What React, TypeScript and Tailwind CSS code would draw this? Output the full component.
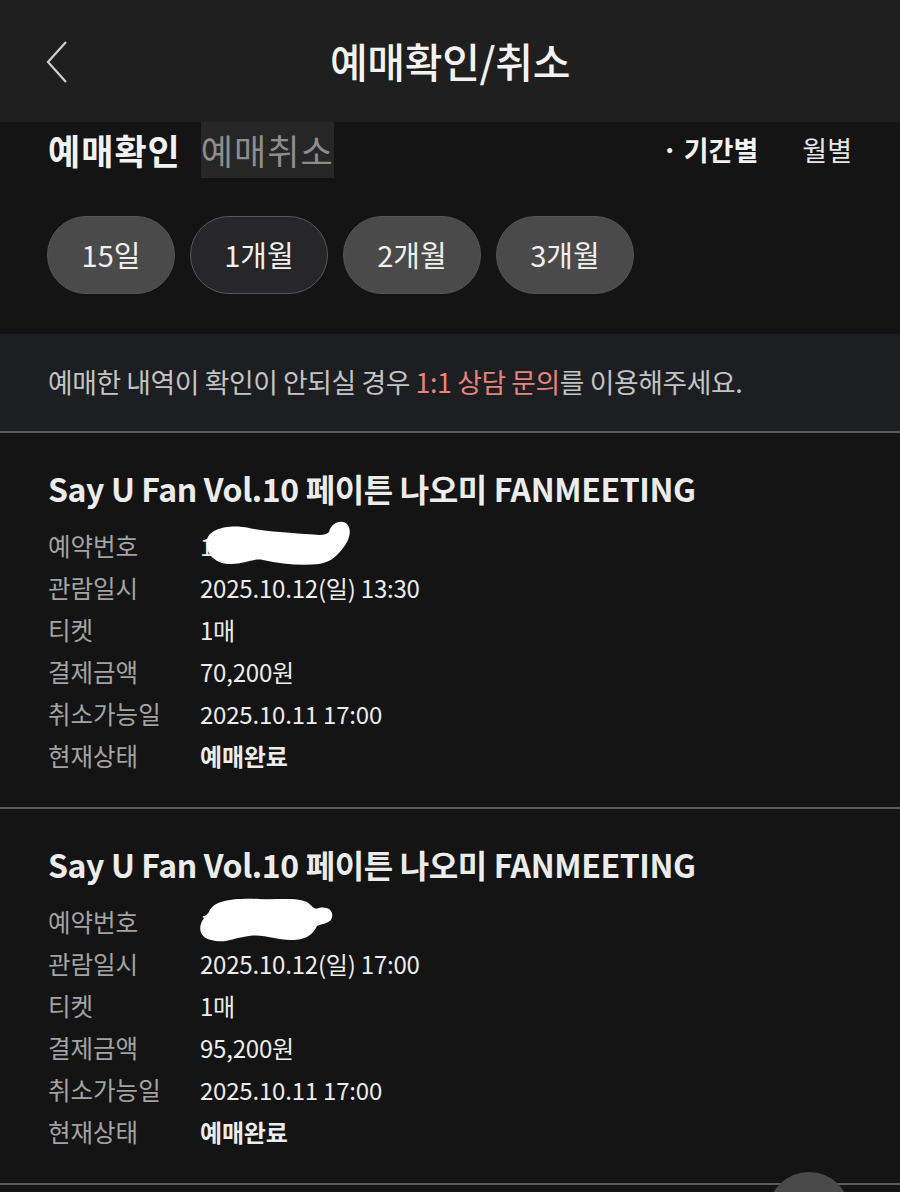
import React from "react";

const FONT = { fontFamily: '"Noto Sans CJK KR", "Noto Sans", sans-serif' };

type Booking = {
  title: string;
  date: string;
  tickets: string;
  price: string;
  cancelUntil: string;
  status: string;
  blob: "a" | "b";
};

const bookings: Booking[] = [
  {
    title: "Say U Fan Vol.10 페이튼 나오미 FANMEETING",
    date: "2025.10.12(일) 13:30",
    tickets: "1매",
    price: "70,200원",
    cancelUntil: "2025.10.11 17:00",
    status: "예매완료",
    blob: "a",
  },
  {
    title: "Say U Fan Vol.10 페이튼 나오미 FANMEETING",
    date: "2025.10.12(일) 17:00",
    tickets: "1매",
    price: "95,200원",
    cancelUntil: "2025.10.11 17:00",
    status: "예매완료",
    blob: "b",
  },
];

const periods = [
  { label: "15일", w: "w-[128px]", active: false },
  { label: "1개월", w: "w-[138px]", active: true },
  { label: "2개월", w: "w-[138px]", active: false },
  { label: "3개월", w: "w-[138px]", active: false },
];

function Redaction({ kind }: { kind: "a" | "b" }) {
  if (kind === "a") {
    return (
      <svg
        width="150"
        height="48"
        viewBox="0 0 150 48"
        className="absolute left-[1px] top-[-8px]"
      >
        <path
          d="M6 20 C8 8 30 4 48 8 C62 11 80 12 104 14 C118 15 124 16 128 12 C130 3 140 -1 146 4 C151 9 149 20 142 28 C136 36 130 42 118 44 C100 46 80 44 62 40 C52 38 44 44 30 44 C14 44 4 34 6 20 Z"
          fill="#ffffff"
        />
      </svg>
    );
  }
  return (
    <svg
      width="142"
      height="50"
      viewBox="0 0 142 50"
      className="absolute left-[-5px] top-[-10px]"
    >
      <path
        d="M14 18 C18 6 40 4 64 5 C84 6 100 3 112 8 C118 12 118 16 124 14 C134 12 140 18 136 26 C132 30 126 30 122 32 C118 40 112 46 96 46 C80 46 70 40 54 42 C38 44 30 50 16 46 C2 42 2 30 14 18 Z"
        fill="#ffffff"
      />
    </svg>
  );
}

function Row({ label, children }: { label: string; children: React.ReactNode }) {
  return (
    <div className="flex items-center h-[42px]">
      <div className="w-[152px] text-[24.5px] text-[#a3a3a3]">{label}</div>
      <div className="text-[24px] text-[#ececec] tracking-[-0.2px]">{children}</div>
    </div>
  );
}

function BookingCard({ b }: { b: Booking }) {
  return (
    <div className="px-[48px] pt-[35px] pb-[30px] border-b-2 border-[#5c5c5c]">
      <h2 className="text-[32px] leading-[40px] font-bold text-[#ececec] tracking-[-0.4px] mb-[17px]">
        {b.title}
      </h2>
      <Row label="예약번호">
        <span className="relative inline-block">
          <span>1&nbsp;&nbsp;&nbsp;&nbsp;&nbsp;&nbsp;&nbsp;&nbsp;&nbsp;&nbsp;&nbsp;&nbsp;0</span>
          <Redaction kind={b.blob} />
        </span>
      </Row>
      <Row label="관람일시">{b.date}</Row>
      <Row label="티켓">{b.tickets}</Row>
      <Row label="결제금액">{b.price}</Row>
      <Row label="취소가능일">{b.cancelUntil}</Row>
      <Row label="현재상태">
        <span className="font-bold">{b.status}</span>
      </Row>
    </div>
  );
}

export default function App() {
  return (
    <div
      className="w-[900px] h-[1192px] overflow-hidden relative bg-[#141414]"
      style={FONT}
    >
      {/* header */}
      <div className="relative h-[122px] bg-[#1f1f1f] flex items-center justify-center">
        <svg
          width="26"
          height="44"
          viewBox="0 0 26 44"
          className="absolute left-[44px] top-[40px]"
        >
          <path d="M22 2 L4 22 L22 42" fill="none" stroke="#cfcfcf" strokeWidth="2.2" />
        </svg>
        <h1 className="text-[41px] font-medium text-[#f2f2f2] tracking-[-0.3px]">
          예매확인/취소
        </h1>
      </div>

      {/* tabs + period filter */}
      <div className="bg-[#141414] pb-[40px]">
        <div className="flex items-stretch h-[56px] pl-[48px] pr-[48px]">
          <div className="flex items-center text-[35px] font-bold text-[#f2f2f2] tracking-[1px]">
            예매확인
          </div>
          <div className="ml-[20px] flex items-center bg-[#262626] text-[35px] text-[#8d8d8d] tracking-[1px]">
            예매취소
          </div>
          <div className="ml-auto flex items-center gap-[44px] text-[27px]">
            <span className="font-bold text-[#f2f2f2]">
              <span className="mr-[6px]">·</span>기간별
            </span>
            <span className="text-[#e6e6e6]">월별</span>
          </div>
        </div>

        <div className="flex gap-[15px] pl-[47px] mt-[38px]">
          {periods.map((p) => (
            <button
              key={p.label}
              className={`${p.w} h-[78px] rounded-full border text-[29px] text-[#f0f0f0] ${
                p.active
                  ? "bg-[#27272a] border-[#585858]"
                  : "bg-[#4a4a4a] border-[#555555]"
              }`}
            >
              {p.label}
            </button>
          ))}
        </div>
      </div>

      {/* notice */}
      <div className="h-[99px] bg-[#1d1e21] border-b-2 border-[#5c5c5c] flex items-center pl-[48px]">
        <p className="text-[26.8px] text-[#c4c4c4] tracking-[-0.4px]">
          예매한 내역이 확인이 안되실 경우{" "}
          <span className="text-[#e8837c]">1:1 상담 문의</span>를 이용해주세요.
        </p>
      </div>

      {bookings.map((b, i) => (
        <BookingCard key={i} b={b} />
      ))}

      {/* floating button peeking at the bottom */}
      <div className="absolute left-[768px] top-[1172px] w-[82px] h-[82px] rounded-full bg-[#4a4a4a]" />
    </div>
  );
}
